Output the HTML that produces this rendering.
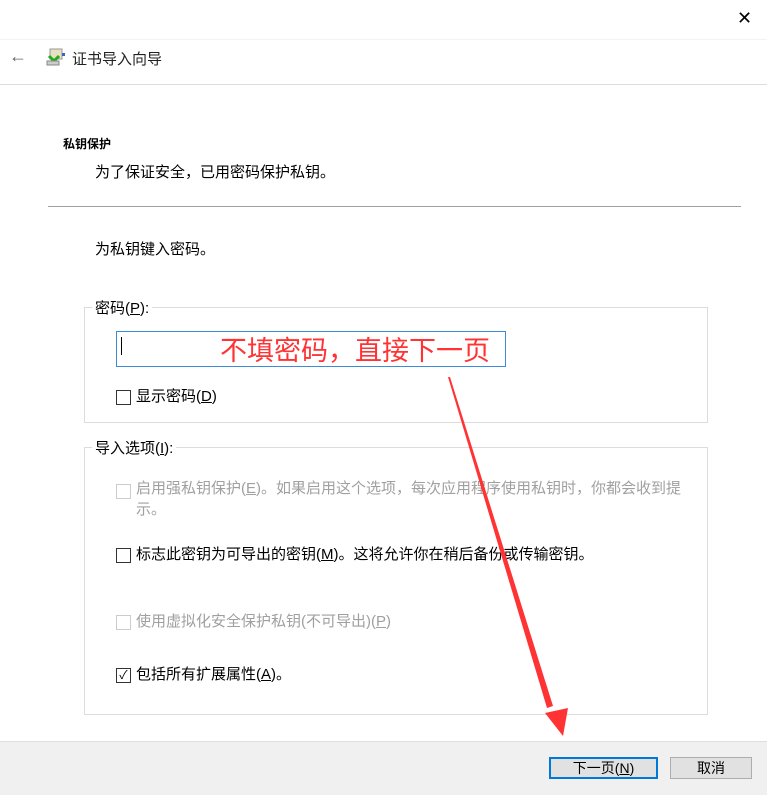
<!DOCTYPE html>
<html><head><meta charset="utf-8"><style>
body{margin:0;width:767px;height:794px;background:#fff;position:relative;overflow:hidden;font-family:"Liberation Sans","Noto Sans CJK SC",sans-serif;font-size:15px;color:#000}
.a{position:absolute;white-space:nowrap}
.cb{position:absolute;width:13px;height:13px;border:1px solid #333;background:#fff;box-sizing:border-box}
.cb.d{border-color:#ccc}
.g{position:absolute;border:1px solid #dcdcdc}
.lg{position:absolute;background:#fff;padding:0 3px;color:#000}
.btn{position:absolute;height:22px;box-sizing:border-box;background:#e1e1e1;border:1px solid #adadad;text-align:center;line-height:20px;font-size:14px}
u{text-decoration:underline}
</style></head><body>
<div class="a" style="left:737px;top:8px;font-size:18px;color:#000">✕</div>
<div style="position:absolute;left:0;top:39px;width:767px;height:1px;background:#f3f3f3"></div>
<div class="a" style="left:9px;top:46px;font-size:18px;color:#666">←</div>
<svg style="position:absolute;left:46px;top:48px" width="20" height="18"><rect x="4" y="1" width="12" height="10" fill="#e8e0c0" stroke="#999"/><path d="M3 8 L8 13 L13 8" stroke="#2a2" stroke-width="3" fill="none"/><rect x="1" y="13" width="12" height="4" fill="#ccc" stroke="#888"/><rect x="16" y="5" width="3" height="3" fill="#36c"/></svg>
<div class="a" style="left:72px;top:48px;font-size:15px;color:#222">证书导入向导</div>
<div style="position:absolute;left:0;top:84px;width:767px;height:1px;background:#ddd"></div>
<div class="a" style="left:63px;top:135px;font-size:12px;font-weight:bold">私钥保护</div>
<div class="a" style="left:95px;top:161px">为了保证安全，已用密码保护私钥。</div>
<div style="position:absolute;left:48px;top:206px;width:693px;height:1px;background:#a0a0a0"></div>
<div class="a" style="left:95px;top:238px">为私钥键入密码。</div>
<div class="g" style="left:84px;top:307px;width:622px;height:114px"></div>
<div class="lg" style="left:92px;top:297px">密码(<u>P</u>):</div>
<div style="position:absolute;left:116px;top:331px;width:390px;height:36px;box-sizing:border-box;border:1px solid #3c8bd9;background:#fff"></div>
<div style="position:absolute;left:121px;top:337px;width:1px;height:18px;background:#000"></div>
<div class="a" style="left:220px;top:329px;font-size:27px;color:#f33">不填密码，直接下一页</div>
<div class="cb" style="left:116px;top:390px;width:15px;height:15px"></div>
<div class="a" style="left:136px;top:385px">显示密码(<u>D</u>)</div>
<div class="g" style="left:84px;top:447px;width:622px;height:266px"></div>
<div class="lg" style="left:92px;top:437px">导入选项(<u>I</u>):</div>
<div class="cb d" style="left:116px;top:484px;width:15px;height:15px"></div>
<div class="a" style="left:136px;top:478px;color:#a0a0a0;white-space:normal;width:556px;line-height:21px">启用强私钥保护(<u>E</u>)。如果启用这个选项，每次应用程序使用私钥时，你都会收到提示。</div>
<div class="cb" style="left:116px;top:548px;width:15px;height:15px"></div>
<div class="a" style="left:136px;top:543px">标志此密钥为可导出的密钥(<u>M</u>)。这将允许你在稍后备份或传输密钥。</div>
<div class="cb d" style="left:116px;top:615px;width:15px;height:15px"></div>
<div class="a" style="left:136px;top:610px;color:#a0a0a0">使用虚拟化安全保护私钥(不可导出)(<u>P</u>)</div>
<div class="cb" style="left:116px;top:668px;width:15px;height:15px;font-size:12px;line-height:12px;text-align:center">✓</div>
<div class="a" style="left:136px;top:663px">包括所有扩展属性(<u>A</u>)。</div>
<div style="position:absolute;left:0;top:741px;width:767px;height:53px;background:#f0f0f0;border-top:1px solid #dfdfdf"></div>
<div class="btn" style="left:549px;top:757px;width:109px;border:2px solid #0078d7;line-height:18px">下一页(<u>N</u>)</div>
<div class="btn" style="left:670px;top:757px;width:82px">取消</div>
<svg style="position:absolute;left:0;top:0" width="767" height="794"><polygon points="448,377 450,377 553,706 547,708" fill="#f33"/><polygon points="545,713 568,708 563,736" fill="#f33"/></svg>
</body></html>
